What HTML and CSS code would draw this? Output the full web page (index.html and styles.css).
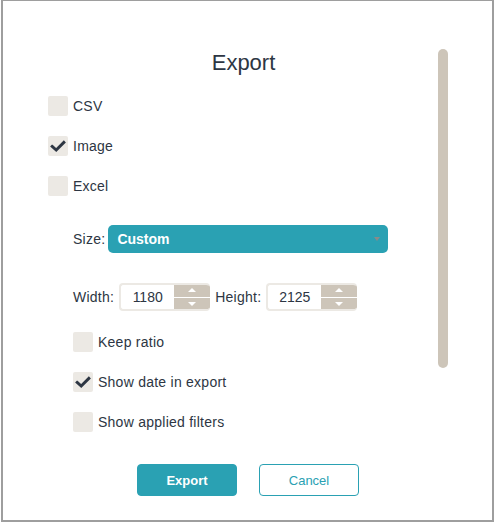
FILE: index.html
```html
<!DOCTYPE html>
<html>
<head>
<meta charset="utf-8">
<link rel="stylesheet" href="styles.css">
</head>
<body>
<div class="dialog">
  <div class="content">
    <h1 class="title">Export</h1>
    <div class="options">
      <label class="check-row"><span class="box"></span><span>CSV</span></label>
      <label class="check-row"><span class="box"><svg class="tick" viewBox="0 0 20 20"><path d="M3.5 10.5 L8 14.5 L16.5 6" /></svg></span><span>Image</span></label>
      <label class="check-row"><span class="box"></span><span>Excel</span></label>
    </div>
    <div class="sub">
      <div class="size-row">
        <span class="lbl">Size:</span>
        <div class="select"><span>Custom</span><span class="caret"></span></div>
      </div>
      <div class="dims-row">
        <span class="lbl">Width:</span>
        <div class="num"><span class="val">1180</span><span class="spin"><span class="up"><i class="tri-up"></i></span><span class="down"><i class="tri-down"></i></span></span></div>
        <span class="lbl">Height:</span>
        <div class="num"><span class="val">2125</span><span class="spin"><span class="up"><i class="tri-up"></i></span><span class="down"><i class="tri-down"></i></span></span></div>
      </div>
      <div class="options sub-options">
        <label class="check-row"><span class="box"></span><span>Keep ratio</span></label>
        <label class="check-row"><span class="box"><svg class="tick" viewBox="0 0 20 20"><path d="M3.5 10.5 L8 14.5 L16.5 6" /></svg></span><span>Show date in export</span></label>
        <label class="check-row"><span class="box"></span><span>Show applied filters</span></label>
      </div>
    </div>
    <div class="actions">
      <button class="btn primary">Export</button>
      <button class="btn secondary">Cancel</button>
    </div>
  </div>
  <div class="scroll-thumb"></div>
</div>
</body>
</html>
```
FILE: styles.css
```css
html, body {
  margin: 0;
  padding: 0;
  background: #ffffff;
}
body {
  font-family: "Liberation Sans", Arial, sans-serif;
  color: #2d3643;
}
.dialog {
  position: relative;
  box-sizing: border-box;
  width: 493px;
  height: 522px;
  margin-left: 1px;
  border: 2px solid #9e9e9e;
  border-top-width: 1px;
  background: #fff;
}
.content {
  padding: 49px 0 0 45px;
}
.title {
  margin: 0 0 0 -45px;
  padding-right: 8px;
  text-align: center;
  font-size: 22px;
  line-height: 26px;
  font-weight: normal;
  color: #2d3643;
}
.options {
  display: flex;
  flex-direction: column;
  gap: 20px;
  margin-top: 20px;
}
.check-row {
  display: flex;
  align-items: center;
  gap: 5px;
  height: 20px;
  font-size: 14px;
  letter-spacing: 0.25px;
}
.box {
  width: 20px;
  height: 20px;
  border-radius: 2px;
  background: #ece9e4;
  display: flex;
  align-items: center;
  justify-content: center;
}
.tick {
  width: 18px;
  height: 18px;
}
.tick path {
  fill: none;
  stroke: #2d3643;
  stroke-width: 3.2;
  stroke-linecap: square;
}
.sub {
  padding-left: 25px;
}
.size-row {
  display: flex;
  align-items: center;
  gap: 3px;
  margin-top: 29px;
  font-size: 14px;
}
.lbl {
  letter-spacing: 0.25px;
}
.select {
  box-sizing: border-box;
  width: 280px;
  height: 28px;
  border-radius: 5px;
  background: #2aa1b3;
  color: #fff;
  font-weight: bold;
  display: flex;
  align-items: center;
  justify-content: space-between;
  padding: 0 8px 0 9px;
}
.caret {
  width: 0;
  height: 0;
  border-left: 3px solid transparent;
  border-right: 3px solid transparent;
  border-top: 4px solid #8a8a8a;
}
.dims-row {
  display: flex;
  align-items: center;
  gap: 5px;
  margin-top: 30px;
  font-size: 14px;
}
.num {
  box-sizing: border-box;
  display: flex;
  height: 28px;
  width: 91px;
  border: 2px solid #ece9e4;
  border-right: none;
  border-radius: 4px;
  overflow: hidden;
  background: #fff;
}
.val {
  flex: 1;
  display: flex;
  align-items: center;
  justify-content: center;
  font-size: 14px;
}
.spin {
  width: 36px;
  display: flex;
  flex-direction: column;
  gap: 1px;
  background: #fff;
  margin-top: -2px;
  margin-bottom: -2px;
}
.spin .up, .spin .down {
  flex: 1;
  background: #cdc5b9;
  display: flex;
  align-items: center;
  justify-content: center;
}
.tri-up {
  width: 0;
  height: 0;
  border-left: 4px solid transparent;
  border-right: 4px solid transparent;
  border-bottom: 4px solid #fff;
}
.tri-down {
  width: 0;
  height: 0;
  border-left: 4px solid transparent;
  border-right: 4px solid transparent;
  border-top: 4px solid #fff;
}
.sub-options {
  margin-top: 21px;
}
.actions {
  display: flex;
  gap: 22px;
  margin-top: 32px;
  padding-left: 89px;
}
.btn {
  box-sizing: border-box;
  width: 100px;
  height: 32px;
  border-radius: 4px;
  font-family: "Liberation Sans", Arial, sans-serif;
  font-size: 13px;
  cursor: pointer;
}
.primary {
  background: #2aa1b3;
  border: 1px solid #2aa1b3;
  color: #fff;
  font-weight: bold;
}
.secondary {
  background: #fff;
  border: 1px solid #2aa1b3;
  color: #2aa1b3;
}
.scroll-thumb {
  position: absolute;
  left: 435px;
  top: 48px;
  width: 10px;
  height: 319px;
  border-radius: 5px;
  background: #cdc5b9;
}
```
